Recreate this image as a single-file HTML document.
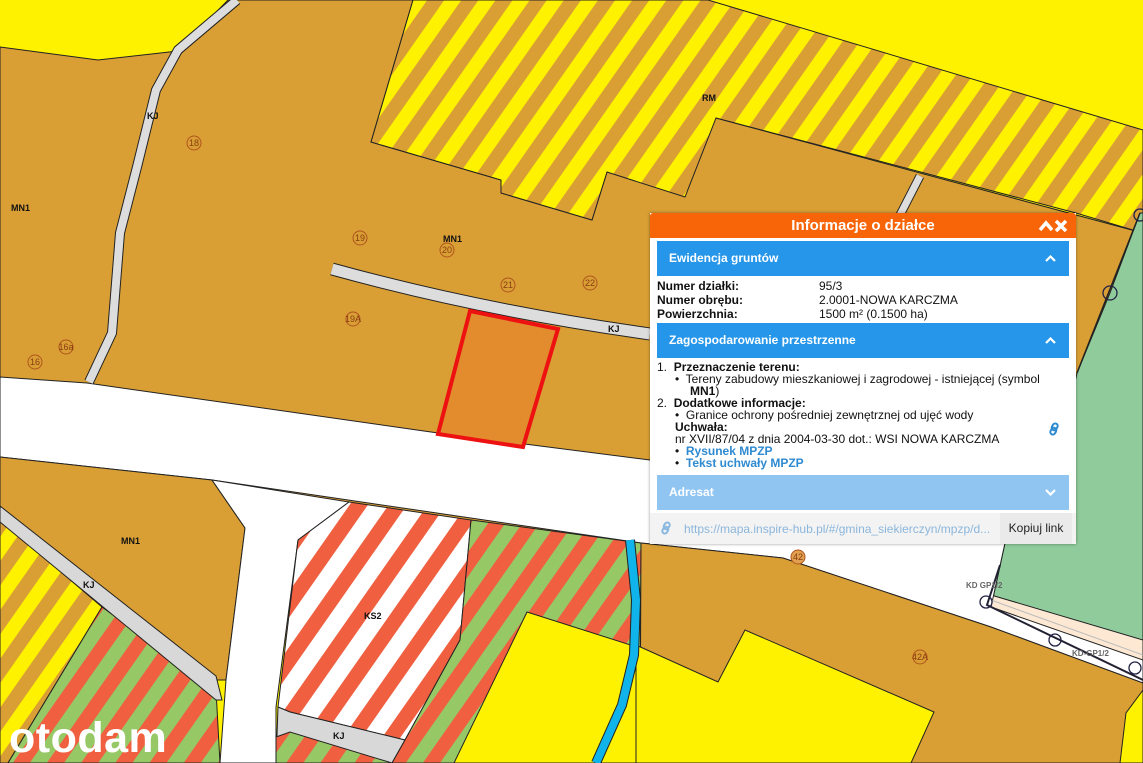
<!DOCTYPE html>
<html><head><meta charset="utf-8"><style>
html,body{margin:0;padding:0;width:1143px;height:763px;overflow:hidden;background:#fff200;font-family:"Liberation Sans",Arial,sans-serif;}
svg.map{position:absolute;left:0;top:0}
.lbl{font:bold 9px "Liberation Sans",sans-serif;fill:#111;}
.num{font:9px "Liberation Sans",sans-serif;fill:#8a3b10;}
#pop{position:absolute;left:650px;top:213px;width:426px;height:331px;background:#fff;box-shadow:0 0 3px rgba(0,0,0,.4);font-size:12px;color:#111;}
#hdr{height:25px;background:#f76508;color:#fff;font-weight:bold;font-size:15px;text-align:center;line-height:25px;position:relative;border-radius:3px 3px 0 0}
#hdr svg{position:absolute;right:8px;top:6px}
.sec{position:absolute;left:7px;width:412px;height:35px;background:#2596ea;color:#fff;font-weight:bold;font-size:12px;line-height:35px;box-sizing:border-box;padding-left:12px}
.sec svg{position:absolute;right:13px;top:14px}
.row{position:absolute;left:7px;line-height:14px}
.row b{display:inline-block;width:162px}
a{color:#2e8ad1;font-weight:bold;text-decoration:none}
#ft{position:absolute;left:0;top:300px;width:426px;height:31px;background:#f3f3f3;}
</style></head><body>
<svg class="map" width="1143" height="763" viewBox="0 0 1143 763">
<defs>
<pattern id="yb" width="28" height="28" patternUnits="userSpaceOnUse" patternTransform="rotate(35)"><rect width="28" height="28" fill="#d99f35"/><rect width="14" height="28" fill="#fff200"/></pattern>
<pattern id="rg" width="28" height="28" patternUnits="userSpaceOnUse" patternTransform="rotate(35)"><rect width="28" height="28" fill="#96c866"/><rect width="14" height="28" fill="#f06040"/></pattern>
<pattern id="rw" width="32" height="32" patternUnits="userSpaceOnUse" patternTransform="rotate(35)"><rect width="32" height="32" fill="#fff"/><rect width="15" height="32" fill="#f06040"/></pattern>
</defs>
<rect width="1143" height="763" fill="#fff200"/>
<g stroke="#222" stroke-width="1">
<polygon points="0,47 98,60 178,51 228,0 413,0 371,142 501,180 501,193 592,220 607,172 650,185 716,118 1143,233 1143,640 0,640" fill="#d99f35"/>
<polygon points="413,0 708,0 1143,130 1143,233 1076,213 716,118 685,197 607,172 592,220 501,193 501,180 371,142" fill="url(#yb)"/>
<polygon points="1140,213 1143,213 1143,650 991,607 1005,543 1060,450 1077,373 1110,293" fill="#8fcb9b"/>
<polygon points="991,595 1143,640 1143,690 990,612" fill="#fde9d3"/>
<polygon points="0,377 87,383 438,433 650,460 1005,543 991,607 1143,660 1143,683 991,627 783,558 641,543 212,480 0,457" fill="#fff"/>
<polygon points="0,457 212,480 245,528 226,680 216,680 0,510" fill="#d99f35"/>
<polygon points="0,520 102,607 8,763 0,763" fill="url(#yb)"/>
<polygon points="102,607 216,690 220,763 8,763" fill="url(#rg)"/>
<polygon points="0,506 216,676 222,700 216,700 0,522" fill="#d8d8d8"/>
<polygon points="212,480 349,502 298,540 276,707 276,763 220,763 226,680 245,528" fill="#fff"/>
<polygon points="349,502 471,520 460,640 405,740 290,712 278,707 298,540" fill="url(#rw)"/>
<polygon points="278,707 290,712 405,740 392,763 276,763" fill="#d8d8d8"/>
<polygon points="276,737 290,732 392,763 276,763" fill="url(#rg)"/>
<polygon points="471,520 641,543 640,763 392,763 405,740 460,640" fill="url(#rg)"/>
<polygon points="527,612 640,648 640,763 454,763" fill="#fff200"/>
<polygon points="641,543 783,558 991,627 1143,683 1143,763 640,763" fill="#d99f35"/>
<polygon points="636,645 718,682 745,630 934,712 911,763 636,763" fill="#fff200"/>
<polygon points="1143,690 1126,713 1120,763 1143,763" fill="#fff200"/>
<polyline points="237,0 178,50 156,90 137,167 120,233 112,333 89,382" fill="none" stroke="#222" stroke-width="10" stroke-linejoin="round"/>
<polyline points="237,0 178,50 156,90 137,167 120,233 112,333 89,382" fill="none" stroke="#ddd" stroke-width="8" stroke-linejoin="round"/>
<path d="M332,269 Q480,310 650,334" fill="none" stroke="#222" stroke-width="13"/>
<path d="M332,269 Q480,310 650,334" fill="none" stroke="#ddd" stroke-width="11"/>
<path d="M920,176 L900,215" stroke="#222" stroke-width="9"/><path d="M920,176 L900,215" stroke="#ddd" stroke-width="7"/>
</g>
<path d="M1140,213 L1077,373" stroke="#222" stroke-width="1.5"/>
<path d="M630,540 L636,600 L634,655 L622,705 L596,763" fill="none" stroke="#222" stroke-width="10"/>
<path d="M630,540 L636,600 L634,655 L622,705 L596,763" fill="none" stroke="#10b4ea" stroke-width="8"/>
<path d="M1000,565 L987,605 L1143,680" fill="none" stroke="#223" stroke-width="2"/>
<path d="M991,600 L1143,655" fill="none" stroke="#bbb" stroke-width="1"/>
<g fill="none" stroke="#224" stroke-width="1.3"><circle cx="986" cy="602" r="6"/><circle cx="1055" cy="640" r="6"/><circle cx="1135" cy="668" r="6"/><circle cx="1110" cy="293" r="7"/><circle cx="1140" cy="215" r="6"/></g>
<polygon points="470,311 558,329 523,447 438,434" fill="#e28c2e" stroke="#ee1111" stroke-width="4"/>
<g class="lbl"><text x="11" y="211">MN1</text><text x="443" y="242">MN1</text><text x="121" y="544">MN1</text><text x="702" y="101">RM</text><text x="147" y="119">KJ</text><text x="608" y="332">KJ</text><text x="83" y="588">KJ</text><text x="333" y="739">KJ</text><text x="364" y="619">KS2</text></g>
<g font-size="8" fill="#666" font-weight="bold" font-family="Liberation Sans"><text x="966" y="588">KD GP1/2</text><text x="1072" y="656">KD-GP1/2</text></g>
<g fill="#e0a050" stroke="#b0541c" stroke-width="1"><circle cx="194" cy="143" r="7" fill="none"/><circle cx="360" cy="238" r="7" fill="none"/><circle cx="447" cy="250" r="7" fill="none"/><circle cx="508" cy="285" r="7" fill="none"/><circle cx="590" cy="283" r="7" fill="none"/><circle cx="353" cy="319" r="7" fill="none"/><circle cx="66" cy="347" r="7" fill="none"/><circle cx="35" cy="362" r="7" fill="none"/><circle cx="798" cy="557" r="7"/><circle cx="920" cy="657" r="7" fill="none"/></g>
<g class="num" text-anchor="middle"><text x="194" y="146">18</text><text x="360" y="241">19</text><text x="447" y="253">20</text><text x="508" y="288">21</text><text x="590" y="286">22</text><text x="353" y="322">19A</text><text x="66" y="350">16a</text><text x="35" y="365">16</text><text x="798" y="560">42</text><text x="920" y="660">42A</text></g>
<text x="9" y="752" font-family="Liberation Sans" font-weight="bold" font-size="43" fill="#fff" letter-spacing="0.5">otodam</text>
</svg>
<div id="pop">
<div id="hdr">Informacje o działce<svg width="30" height="14" viewBox="0 0 30 14"><path d="M2,11 L8,4 L14,11" fill="none" stroke="#fff" stroke-width="3.5"/><path d="M18,2 L28,12 M28,2 L18,12" stroke="#fff" stroke-width="3.5"/></svg></div>
<div class="sec" style="top:28px">Ewidencja gruntów<svg width="11" height="7" viewBox="0 0 11 7"><path d="M1,6 L5.5,1.5 L10,6" fill="none" stroke="#fff" stroke-width="2.2"/></svg></div>
<div class="row" style="top:66px"><b>Numer działki:</b>95/3</div>
<div class="row" style="top:80px"><b>Numer obrębu:</b>2.0001-NOWA KARCZMA</div>
<div class="row" style="top:94px"><b>Powierzchnia:</b>1500 m² (0.1500 ha)</div>
<div class="sec" style="top:110px">Zagospodarowanie przestrzenne<svg width="11" height="7" viewBox="0 0 11 7"><path d="M1,6 L5.5,1.5 L10,6" fill="none" stroke="#fff" stroke-width="2.2"/></svg></div>
<div class="row" style="top:148px;line-height:12px">
1.&nbsp; <b style="width:auto">Przeznaczenie terenu:</b><br>
<span style="padding-left:18px">•&nbsp; Tereny zabudowy mieszkaniowej i zagrodowej - istniejącej (symbol</span><br>
<span style="padding-left:33px"><b style="width:auto">MN1</b>)</span><br>
2.&nbsp; <b style="width:auto">Dodatkowe informacje:</b><br>
<span style="padding-left:18px">•&nbsp; Granice ochrony pośredniej zewnętrznej od ujęć wody</span><br>
<span style="padding-left:18px"><b style="width:auto">Uchwała:</b></span><br>
<span style="padding-left:18px">nr XVII/87/04 z dnia 2004-03-30 dot.: WSI NOWA KARCZMA</span><br>
<span style="padding-left:18px">•&nbsp; <a>Rysunek MPZP</a></span><br>
<span style="padding-left:18px">•&nbsp; <a>Tekst uchwały MPZP</a></span>
</div>
<svg style="position:absolute;left:398px;top:209px" width="12" height="14" viewBox="0 0 12 14"><g fill="none" stroke="#2e8ad1" stroke-width="2"><rect x="4" y="1" width="5" height="7" rx="2.5" transform="rotate(30 6 5)"/><rect x="3" y="6" width="5" height="7" rx="2.5" transform="rotate(30 6 9)"/></g></svg>
<div class="sec" style="top:262px;background:#90c5f2">Adresat<svg width="11" height="7" viewBox="0 0 11 7"><path d="M1,1 L5.5,5.5 L10,1" fill="none" stroke="#fff" stroke-width="2.2"/></svg></div>
<div id="ft"><svg style="position:absolute;left:10px;top:8px" width="12" height="14" viewBox="0 0 12 14"><g fill="none" stroke="#8ab8e0" stroke-width="2"><rect x="4" y="1" width="5" height="7" rx="2.5" transform="rotate(30 6 5)"/><rect x="3" y="6" width="5" height="7" rx="2.5" transform="rotate(30 6 9)"/></g></svg><span style="position:absolute;left:34px;top:9px;color:#8bb6dc;font-size:12px">https://mapa.inspire-hub.pl/#/gmina_siekierczyn/mpzp/d...</span><span style="position:absolute;left:350px;top:0;width:72px;height:31px;background:#eaeaea;line-height:30px;text-align:center;color:#222">Kopiuj link</span></div>
</div>
</body></html>
